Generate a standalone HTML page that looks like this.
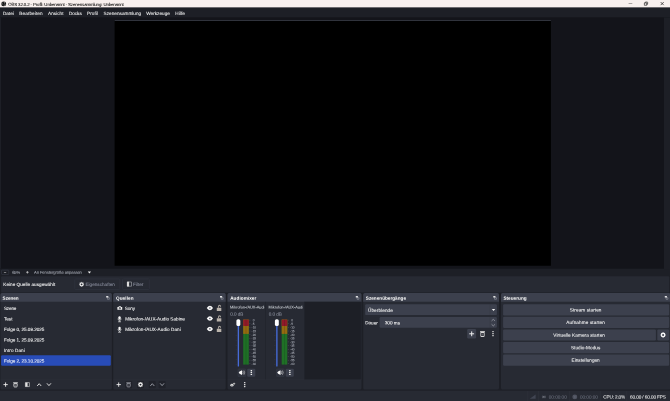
<!DOCTYPE html><html lang="de"><head><meta charset="utf-8"><title>OBS 32.0.2</title><style>
html,body{margin:0;padding:0;}body{width:670px;height:401px;overflow:hidden;position:relative;background:#1d1f26;}#ui{position:absolute;left:0;top:0;will-change:transform;font-family:"Liberation Sans",sans-serif;}#ui text{white-space:pre;}
</style></head><body>
<svg id="ui" width="670" height="401" viewBox="0 0 670 401">
<rect x="0.00" y="0.00" width="670.00" height="7.60" fill="#f8f0ee"/>
<rect x="0.00" y="7.60" width="670.00" height="9.80" fill="#1d1f26"/>
<rect x="0.00" y="17.40" width="670.00" height="251.30" fill="#13141a"/>
<rect x="664.00" y="17.40" width="6.00" height="251.80" fill="#1d1f26"/>
<rect x="0.00" y="17.40" width="1.00" height="251.30" fill="#1d1f26"/>
<rect x="114.60" y="20.00" width="436.30" height="245.75" fill="#000"/>
<rect x="114.60" y="20.00" width="436.30" height="1.00" fill="#30333c"/>
<rect x="1.10" y="276.15" width="668.20" height="16.45" rx="1.2" fill="#272a33"/>
<svg x="1.10" y="1.30" width="5.20" height="5.20" viewBox="0 0 16 16" preserveAspectRatio="none" overflow="visible"><circle cx="8" cy="8" r="7.6" fill="#111"/><path d="M8 2.6a3 3 0 0 1 2.6 4.4M12.8 9.4a3 3 0 0 1-4.9 2.2M3.4 10a3 3 0 0 1 1.4-4.6" fill="none" stroke="#e8e0e0" stroke-width="1.5"/></svg>
<rect x="628.60" y="3.15" width="3.70" height="0.50" fill="#5a5a5a"/>
<svg x="644.15" y="1.80" width="3.70" height="3.70" viewBox="0 0 16 16" preserveAspectRatio="none" overflow="visible"><path d="M1 4.8H11.2V15H1Z" fill="none" stroke="#101010" stroke-width="2.6" stroke-linejoin="round"/><path d="M4.8 4.8V2.6Q4.8 1 6.4 1H13.4Q15 1 15 2.6V9.6Q15 11.2 13.4 11.2H11.2" fill="none" stroke="#101010" stroke-width="2.6"/></svg>
<svg x="660.45" y="1.85" width="3.50" height="3.50" viewBox="0 0 16 16" preserveAspectRatio="none" overflow="visible"><path d="M1 1L15 15M15 1L1 15" stroke="#101010" stroke-width="3"/></svg>
<rect x="1.55" y="270.15" width="7.20" height="4.30" rx="0.55" fill="none" stroke="#3d414e" stroke-width="0.5"/>
<rect x="3.90" y="272.05" width="2.30" height="0.50" fill="#d8d8d8"/>
<svg x="25.90" y="270.80" width="3.00" height="3.00" viewBox="0 0 16 16" preserveAspectRatio="none" overflow="visible"><path d="M8 1V15M1 8H15" stroke="#e0e0e0" stroke-width="3.2"/></svg>
<svg x="87.70" y="271.30" width="3.40" height="2.20" viewBox="0 0 16 16" preserveAspectRatio="none" overflow="visible"><path d="M0.5 1H15.5L8 15.5Z" fill="#f2f2f2"/></svg>
<rect x="74.75" y="278.95" width="45.10" height="10.50" rx="0.95" fill="#272a33" stroke="#343844" stroke-width="0.5"/>
<rect x="122.45" y="278.95" width="26.90" height="10.50" rx="0.95" fill="#272a33" stroke="#343844" stroke-width="0.5"/>
<svg x="79.15" y="281.85" width="4.90" height="4.90" viewBox="0 0 16 16" preserveAspectRatio="none" overflow="visible"><circle cx="8" cy="8" r="5" fill="none" stroke="#ececec" stroke-width="4.2"/><path d="M8 0V16M0 8H16M2.3 2.3L13.7 13.7M13.7 2.3L2.3 13.7" stroke="#ececec" stroke-width="2.2" stroke-dasharray="1.6 12.8 1.6 100" opacity=".8"/></svg>
<svg x="126.90" y="281.60" width="5.00" height="5.00" viewBox="0 0 16 16" preserveAspectRatio="none" overflow="visible"><path d="M1.2 1.2H14.8V14.8H1.2Z" fill="none" stroke="#b4b6bc" stroke-width="1.8"/><path d="M0.4 0.4H7V15.6H0.4Z" fill="#dcdcdc"/></svg>
<rect x="0.40" y="293.10" width="111.50" height="96.50" rx="1.6" fill="#272a33"/>
<path d="M0.40 301.80V294.70Q0.40 293.10 2.00 293.10H110.30Q111.90 293.10 111.90 294.70V301.80Z" fill="#3c404d"/>
<svg x="105.65" y="295.45" width="4.30" height="4.30" viewBox="0 0 16 16" preserveAspectRatio="none" overflow="visible"><path d="M6.5 8.2H13.8V14.2H6.5Z" fill="none" stroke="#9da0aa" stroke-width="1.9"/><path d="M2 2.4H10V7.6H2Z" fill="#f4f4f4"/></svg>
<rect x="113.20" y="293.10" width="112.50" height="96.50" rx="1.6" fill="#272a33"/>
<path d="M113.20 301.80V294.70Q113.20 293.10 114.80 293.10H224.10Q225.70 293.10 225.70 294.70V301.80Z" fill="#3c404d"/>
<svg x="219.45" y="295.45" width="4.30" height="4.30" viewBox="0 0 16 16" preserveAspectRatio="none" overflow="visible"><path d="M6.5 8.2H13.8V14.2H6.5Z" fill="none" stroke="#9da0aa" stroke-width="1.9"/><path d="M2 2.4H10V7.6H2Z" fill="#f4f4f4"/></svg>
<rect x="227.50" y="293.10" width="134.00" height="96.50" rx="1.6" fill="#272a33"/>
<path d="M227.50 301.80V294.70Q227.50 293.10 229.10 293.10H359.90Q361.50 293.10 361.50 294.70V301.80Z" fill="#3c404d"/>
<svg x="355.25" y="295.45" width="4.30" height="4.30" viewBox="0 0 16 16" preserveAspectRatio="none" overflow="visible"><path d="M6.5 8.2H13.8V14.2H6.5Z" fill="none" stroke="#9da0aa" stroke-width="1.9"/><path d="M2 2.4H10V7.6H2Z" fill="#f4f4f4"/></svg>
<rect x="363.20" y="293.10" width="135.80" height="96.50" rx="1.6" fill="#272a33"/>
<path d="M363.20 301.80V294.70Q363.20 293.10 364.80 293.10H497.40Q499.00 293.10 499.00 294.70V301.80Z" fill="#3c404d"/>
<svg x="492.75" y="295.45" width="4.30" height="4.30" viewBox="0 0 16 16" preserveAspectRatio="none" overflow="visible"><path d="M6.5 8.2H13.8V14.2H6.5Z" fill="none" stroke="#9da0aa" stroke-width="1.9"/><path d="M2 2.4H10V7.6H2Z" fill="#f4f4f4"/></svg>
<rect x="501.00" y="293.10" width="169.50" height="96.50" rx="1.6" fill="#272a33"/>
<path d="M501.00 301.80V294.70Q501.00 293.10 502.60 293.10H668.90Q670.50 293.10 670.50 294.70V301.80Z" fill="#3c404d"/>
<svg x="664.25" y="295.45" width="4.30" height="4.30" viewBox="0 0 16 16" preserveAspectRatio="none" overflow="visible"><path d="M6.5 8.2H13.8V14.2H6.5Z" fill="none" stroke="#9da0aa" stroke-width="1.9"/><path d="M2 2.4H10V7.6H2Z" fill="#f4f4f4"/></svg>
<rect x="1.10" y="355.15" width="109.70" height="10.55" rx="1.2" fill="#284cb8"/>
<rect x="0.40" y="379.30" width="111.50" height="0.40" fill="#2e313b"/>
<rect x="113.20" y="379.30" width="112.50" height="0.40" fill="#2e313b"/>
<rect x="227.50" y="379.30" width="134.00" height="0.40" fill="#2e313b"/>
<svg x="3.25" y="382.25" width="4.70" height="4.70" viewBox="0 0 16 16" preserveAspectRatio="none" overflow="visible"><path d="M8 0.6V15.4M0.6 8H15.4" stroke="#f0f0f0" stroke-width="3"/></svg>
<svg x="13.00" y="381.85" width="5.00" height="5.50" viewBox="0 0 16 16" preserveAspectRatio="none" overflow="visible"><path d="M2.8 5H13.2V12.6Q13.2 14.8 11 14.8H5Q2.8 14.8 2.8 12.6Z" fill="none" stroke="#ececec" stroke-width="2.5"/><path d="M0.6 2.4H15.4" stroke="#ececec" stroke-width="2.4"/><path d="M8 7.4V12" stroke="#ececec" stroke-width="1.2" opacity=".7"/></svg>
<svg x="25.05" y="382.25" width="4.70" height="4.70" viewBox="0 0 16 16" preserveAspectRatio="none" overflow="visible"><path d="M1.2 1.2H14.8V14.8H1.2Z" fill="none" stroke="#e2e2e2" stroke-width="2"/><path d="M1.2 1.2H8.6V14.8H1.2Z" fill="#e2e2e2"/></svg>
<svg x="36.70" y="382.20" width="5.00" height="4.80" viewBox="0 0 16 16" preserveAspectRatio="none" overflow="visible"><path d="M1.6 12.6L8 5L14.4 12.6" fill="none" stroke="#e2e2e2" stroke-width="3.1"/></svg>
<svg x="46.45" y="382.20" width="5.00" height="4.80" viewBox="0 0 16 16" preserveAspectRatio="none" overflow="visible"><path d="M1.6 3.8L8 11.4L14.4 3.8" fill="none" stroke="#e2e2e2" stroke-width="3.1"/></svg>
<rect x="125.10" y="381.00" width="7.00" height="7.20" rx="1" fill="#20222a"/>
<rect x="137.00" y="381.00" width="7.00" height="7.20" rx="1" fill="#20222a"/>
<rect x="148.80" y="381.00" width="7.00" height="7.20" rx="1" fill="#20222a"/>
<rect x="158.60" y="381.00" width="7.00" height="7.20" rx="1" fill="#20222a"/>
<svg x="116.35" y="382.25" width="4.70" height="4.70" viewBox="0 0 16 16" preserveAspectRatio="none" overflow="visible"><path d="M8 0.6V15.4M0.6 8H15.4" stroke="#f0f0f0" stroke-width="3"/></svg>
<svg x="126.10" y="381.90" width="5.00" height="5.40" viewBox="0 0 16 16" preserveAspectRatio="none" overflow="visible"><path d="M2.8 5H13.2V12.6Q13.2 14.8 11 14.8H5Q2.8 14.8 2.8 12.6Z" fill="none" stroke="#9a9da6" stroke-width="2.5"/><path d="M0.6 2.4H15.4" stroke="#9a9da6" stroke-width="2.4"/><path d="M8 7.4V12" stroke="#9a9da6" stroke-width="1.2" opacity=".7"/></svg>
<svg x="137.90" y="382.00" width="5.20" height="5.20" viewBox="0 0 16 16" preserveAspectRatio="none" overflow="visible"><circle cx="8" cy="8" r="5" fill="none" stroke="#f0f0f0" stroke-width="4.2"/><path d="M8 0V16M0 8H16M2.3 2.3L13.7 13.7M13.7 2.3L2.3 13.7" stroke="#f0f0f0" stroke-width="2.2" stroke-dasharray="1.6 12.8 1.6 100" opacity=".8"/></svg>
<svg x="149.80" y="382.20" width="5.00" height="4.80" viewBox="0 0 16 16" preserveAspectRatio="none" overflow="visible"><path d="M1.6 12.6L8 5L14.4 12.6" fill="none" stroke="#9a9da6" stroke-width="3.1"/></svg>
<svg x="159.60" y="382.20" width="5.00" height="4.80" viewBox="0 0 16 16" preserveAspectRatio="none" overflow="visible"><path d="M1.6 3.8L8 11.4L14.4 3.8" fill="none" stroke="#9a9da6" stroke-width="3.1"/></svg>
<svg x="117.05" y="305.48" width="5.50" height="5.00" viewBox="0 0 16 16" preserveAspectRatio="none" overflow="visible"><path d="M1 4.5H4.2L5.4 2.4H10.6L11.8 4.5H15V14H1Z" fill="#f0f0f0"/><circle cx="8" cy="9" r="3" fill="#272a33"/><circle cx="8" cy="9" r="1.4" fill="#f0f0f0"/></svg>
<svg x="206.70" y="305.63" width="6.40" height="4.80" viewBox="0 0 16 16" preserveAspectRatio="none" overflow="visible"><path d="M0.2 8Q4 0.4 8 0.4Q12 0.4 15.8 8Q12 15.6 8 15.6Q4 15.6 0.2 8Z" fill="#f6f6f6"/><ellipse cx="8" cy="7.8" rx="2.1" ry="2.7" fill="#666a76"/></svg>
<svg x="216.70" y="304.73" width="4.70" height="6.30" viewBox="0 0 16 16" preserveAspectRatio="none" overflow="visible"><path d="M0.3 7.8H15.7V16H0.3Z" fill="#bab3ab"/><path d="M6 7.8V4.6Q6 1.6 9.6 1.6Q13.2 1.6 13.2 4.6V5.4" fill="none" stroke="#a9a39d" stroke-width="3.4"/></svg>
<svg x="117.60" y="316.11" width="3.90" height="6.00" viewBox="0 0 16 24" preserveAspectRatio="none" overflow="visible"><rect x="3.4" y="0.4" width="9.2" height="14" rx="4.6" fill="#f6f6f6"/><path d="M2 9.5V11.2Q2 17.6 8 17.6Q14 17.6 14 11.2V9.5" fill="none" stroke="#e8e8e8" stroke-width="2.6"/><path d="M8 18V22" stroke="#ececec" stroke-width="2.8"/><path d="M2 22.6H14" stroke="#f4f4f4" stroke-width="2.6"/></svg>
<svg x="206.70" y="316.11" width="6.40" height="4.80" viewBox="0 0 16 16" preserveAspectRatio="none" overflow="visible"><path d="M0.2 8Q4 0.4 8 0.4Q12 0.4 15.8 8Q12 15.6 8 15.6Q4 15.6 0.2 8Z" fill="#f6f6f6"/><ellipse cx="8" cy="7.8" rx="2.1" ry="2.7" fill="#666a76"/></svg>
<svg x="216.70" y="315.21" width="4.70" height="6.30" viewBox="0 0 16 16" preserveAspectRatio="none" overflow="visible"><path d="M0.3 7.8H15.7V16H0.3Z" fill="#bab3ab"/><path d="M6 7.8V4.6Q6 1.6 9.6 1.6Q13.2 1.6 13.2 4.6V5.4" fill="none" stroke="#a9a39d" stroke-width="3.4"/></svg>
<svg x="117.60" y="326.59" width="3.90" height="6.00" viewBox="0 0 16 24" preserveAspectRatio="none" overflow="visible"><rect x="3.4" y="0.4" width="9.2" height="14" rx="4.6" fill="#f6f6f6"/><path d="M2 9.5V11.2Q2 17.6 8 17.6Q14 17.6 14 11.2V9.5" fill="none" stroke="#e8e8e8" stroke-width="2.6"/><path d="M8 18V22" stroke="#ececec" stroke-width="2.8"/><path d="M2 22.6H14" stroke="#f4f4f4" stroke-width="2.6"/></svg>
<svg x="206.70" y="326.59" width="6.40" height="4.80" viewBox="0 0 16 16" preserveAspectRatio="none" overflow="visible"><path d="M0.2 8Q4 0.4 8 0.4Q12 0.4 15.8 8Q12 15.6 8 15.6Q4 15.6 0.2 8Z" fill="#f6f6f6"/><ellipse cx="8" cy="7.8" rx="2.1" ry="2.7" fill="#666a76"/></svg>
<svg x="216.70" y="325.69" width="4.70" height="6.30" viewBox="0 0 16 16" preserveAspectRatio="none" overflow="visible"><path d="M0.3 7.8H15.7V16H0.3Z" fill="#bab3ab"/><path d="M6 7.8V4.6Q6 1.6 9.6 1.6Q13.2 1.6 13.2 4.6V5.4" fill="none" stroke="#a9a39d" stroke-width="3.4"/></svg>
<rect x="304.70" y="301.80" width="56.10" height="77.60" fill="#1d1f26"/>
<rect x="265.00" y="301.80" width="0.50" height="77.60" fill="#1f2129"/>
<rect x="304.30" y="301.80" width="0.50" height="77.60" fill="#1f2129"/>
<rect x="237.70" y="322.00" width="1.35" height="44.60" rx="0.6" fill="#476bd7"/>
<rect x="236.40" y="319.20" width="3.90" height="6.80" rx="1.6" fill="#fff"/>
<rect x="235.60" y="330.75" width="1.40" height="0.35" fill="#3a3e4a"/>
<rect x="235.60" y="335.50" width="1.40" height="0.35" fill="#3a3e4a"/>
<rect x="235.60" y="340.25" width="1.40" height="0.35" fill="#3a3e4a"/>
<rect x="235.60" y="345.00" width="1.40" height="0.35" fill="#3a3e4a"/>
<rect x="235.60" y="349.75" width="1.40" height="0.35" fill="#3a3e4a"/>
<rect x="235.60" y="354.50" width="1.40" height="0.35" fill="#3a3e4a"/>
<rect x="235.60" y="359.25" width="1.40" height="0.35" fill="#3a3e4a"/>
<rect x="235.60" y="364.00" width="1.40" height="0.35" fill="#3a3e4a"/>
<rect x="243.20" y="319.60" width="5.60" height="45.00" fill="#1f7026"/>
<rect x="243.20" y="319.60" width="5.60" height="14.30" fill="#946a10"/>
<rect x="243.20" y="319.60" width="5.60" height="6.40" fill="#901a28"/>
<rect x="245.85" y="319.60" width="0.30" height="45.00" fill="rgba(20,22,28,.45)"/>
<rect x="249.30" y="319.90" width="1.10" height="0.40" fill="#5c606c"/>
<rect x="249.30" y="323.54" width="1.10" height="0.40" fill="#5c606c"/>
<rect x="249.30" y="327.18" width="1.10" height="0.40" fill="#5c606c"/>
<rect x="249.30" y="330.82" width="1.10" height="0.40" fill="#5c606c"/>
<rect x="249.30" y="334.46" width="1.10" height="0.40" fill="#5c606c"/>
<rect x="249.30" y="338.10" width="1.10" height="0.40" fill="#5c606c"/>
<rect x="249.30" y="341.74" width="1.10" height="0.40" fill="#5c606c"/>
<rect x="249.30" y="345.38" width="1.10" height="0.40" fill="#5c606c"/>
<rect x="249.30" y="349.02" width="1.10" height="0.40" fill="#5c606c"/>
<rect x="249.30" y="352.66" width="1.10" height="0.40" fill="#5c606c"/>
<rect x="249.30" y="356.30" width="1.10" height="0.40" fill="#5c606c"/>
<rect x="249.30" y="359.94" width="1.10" height="0.40" fill="#5c606c"/>
<rect x="249.30" y="363.58" width="1.10" height="0.40" fill="#5c606c"/>
<rect x="237.92" y="368.93" width="7.85" height="7.65" rx="0.88" fill="#2f323d" stroke="#3b3f4c" stroke-width="0.45"/>
<rect x="247.20" y="368.70" width="8.10" height="8.10" rx="1.1" fill="#3c404d"/>
<svg x="238.70" y="370.10" width="6.40" height="5.00" viewBox="0 0 16 16" preserveAspectRatio="none" overflow="visible"><path d="M0 8L2.2 4.6L8.4 0.4V15.6L2.2 11.4Z" fill="#f8f8f8"/><path d="M10.2 3.6Q12.6 8 10.2 12.4" fill="none" stroke="#e8e8e8" stroke-width="1.6"/><path d="M13 1.2Q16.8 8 13 14.8" fill="none" stroke="#e0e0e0" stroke-width="1.6"/></svg>
<svg x="248.65" y="369.75" width="5.40" height="5.40" viewBox="0 0 16 16" preserveAspectRatio="none" overflow="visible"><rect x="5.8" y="0.5" width="4.4" height="3.7" rx="1" fill="#f0f0f0"/><rect x="5.8" y="6.15" width="4.4" height="3.7" rx="1" fill="#f0f0f0"/><rect x="5.8" y="11.8" width="4.4" height="3.7" rx="1" fill="#f0f0f0"/></svg>
<rect x="276.20" y="322.00" width="1.35" height="44.60" rx="0.6" fill="#476bd7"/>
<rect x="274.90" y="319.20" width="3.90" height="6.80" rx="1.6" fill="#fff"/>
<rect x="274.10" y="330.75" width="1.40" height="0.35" fill="#3a3e4a"/>
<rect x="274.10" y="335.50" width="1.40" height="0.35" fill="#3a3e4a"/>
<rect x="274.10" y="340.25" width="1.40" height="0.35" fill="#3a3e4a"/>
<rect x="274.10" y="345.00" width="1.40" height="0.35" fill="#3a3e4a"/>
<rect x="274.10" y="349.75" width="1.40" height="0.35" fill="#3a3e4a"/>
<rect x="274.10" y="354.50" width="1.40" height="0.35" fill="#3a3e4a"/>
<rect x="274.10" y="359.25" width="1.40" height="0.35" fill="#3a3e4a"/>
<rect x="274.10" y="364.00" width="1.40" height="0.35" fill="#3a3e4a"/>
<rect x="281.70" y="319.60" width="5.60" height="45.00" fill="#1f7026"/>
<rect x="281.70" y="319.60" width="5.60" height="14.30" fill="#946a10"/>
<rect x="281.70" y="319.60" width="5.60" height="6.40" fill="#901a28"/>
<rect x="284.35" y="319.60" width="0.30" height="45.00" fill="rgba(20,22,28,.45)"/>
<rect x="287.80" y="319.90" width="1.10" height="0.40" fill="#5c606c"/>
<rect x="287.80" y="323.54" width="1.10" height="0.40" fill="#5c606c"/>
<rect x="287.80" y="327.18" width="1.10" height="0.40" fill="#5c606c"/>
<rect x="287.80" y="330.82" width="1.10" height="0.40" fill="#5c606c"/>
<rect x="287.80" y="334.46" width="1.10" height="0.40" fill="#5c606c"/>
<rect x="287.80" y="338.10" width="1.10" height="0.40" fill="#5c606c"/>
<rect x="287.80" y="341.74" width="1.10" height="0.40" fill="#5c606c"/>
<rect x="287.80" y="345.38" width="1.10" height="0.40" fill="#5c606c"/>
<rect x="287.80" y="349.02" width="1.10" height="0.40" fill="#5c606c"/>
<rect x="287.80" y="352.66" width="1.10" height="0.40" fill="#5c606c"/>
<rect x="287.80" y="356.30" width="1.10" height="0.40" fill="#5c606c"/>
<rect x="287.80" y="359.94" width="1.10" height="0.40" fill="#5c606c"/>
<rect x="287.80" y="363.58" width="1.10" height="0.40" fill="#5c606c"/>
<rect x="276.43" y="368.93" width="7.85" height="7.65" rx="0.88" fill="#2f323d" stroke="#3b3f4c" stroke-width="0.45"/>
<rect x="285.70" y="368.70" width="8.10" height="8.10" rx="1.1" fill="#3c404d"/>
<svg x="277.20" y="370.10" width="6.40" height="5.00" viewBox="0 0 16 16" preserveAspectRatio="none" overflow="visible"><path d="M0 8L2.2 4.6L8.4 0.4V15.6L2.2 11.4Z" fill="#f8f8f8"/><path d="M10.2 3.6Q12.6 8 10.2 12.4" fill="none" stroke="#e8e8e8" stroke-width="1.6"/><path d="M13 1.2Q16.8 8 13 14.8" fill="none" stroke="#e0e0e0" stroke-width="1.6"/></svg>
<svg x="287.15" y="369.75" width="5.40" height="5.40" viewBox="0 0 16 16" preserveAspectRatio="none" overflow="visible"><rect x="5.8" y="0.5" width="4.4" height="3.7" rx="1" fill="#f0f0f0"/><rect x="5.8" y="6.15" width="4.4" height="3.7" rx="1" fill="#f0f0f0"/><rect x="5.8" y="11.8" width="4.4" height="3.7" rx="1" fill="#f0f0f0"/></svg>
<svg x="229.90" y="382.30" width="5.60" height="4.60" viewBox="0 0 16 16" preserveAspectRatio="none" overflow="visible"><circle cx="5.8" cy="10" r="4.6" fill="#dcdcdc"/><circle cx="5.8" cy="10" r="1.5" fill="#272a33"/><circle cx="12.2" cy="4.4" r="3.1" fill="#d0d0d0"/><circle cx="12.2" cy="4.4" r="1" fill="#272a33"/></svg>
<svg x="242.00" y="381.95" width="5.40" height="5.40" viewBox="0 0 16 16" preserveAspectRatio="none" overflow="visible"><rect x="5.8" y="0.5" width="4.4" height="3.7" rx="1" fill="#e2e2e2"/><rect x="5.8" y="6.15" width="4.4" height="3.7" rx="1" fill="#e2e2e2"/><rect x="5.8" y="11.8" width="4.4" height="3.7" rx="1" fill="#e2e2e2"/></svg>
<rect x="365.20" y="304.30" width="131.70" height="10.80" rx="1.2" fill="#3c404d"/>
<rect x="489.80" y="304.30" width="0.40" height="10.80" fill="#343843"/>
<svg x="491.70" y="308.95" width="3.60" height="2.10" viewBox="0 0 16 16" preserveAspectRatio="none" overflow="visible"><path d="M0.5 1H15.5L8 15.5Z" fill="#f4f4f4"/></svg>
<rect x="379.60" y="317.00" width="117.30" height="10.80" rx="1.2" fill="#3c404d"/>
<rect x="489.80" y="317.00" width="0.40" height="10.80" fill="#343843"/>
<rect x="490.20" y="322.30" width="6.70" height="0.30" fill="#363a46"/>
<svg x="491.20" y="318.85" width="4.20" height="2.30" viewBox="0 0 16 16" preserveAspectRatio="none" overflow="visible"><path d="M1.5 14L8 3L14.5 14" fill="none" stroke="#c4c6cd" stroke-width="2.6"/></svg>
<svg x="491.20" y="324.05" width="4.20" height="2.30" viewBox="0 0 16 16" preserveAspectRatio="none" overflow="visible"><path d="M1.5 2L8 13L14.5 2" fill="none" stroke="#c4c6cd" stroke-width="2.6"/></svg>
<rect x="467.20" y="329.00" width="8.90" height="9.50" rx="1.2" fill="#3c404d"/>
<svg x="469.10" y="331.20" width="5.20" height="5.20" viewBox="0 0 16 16" preserveAspectRatio="none" overflow="visible"><path d="M8 0.6V15.4M0.6 8H15.4" stroke="#f4f4f4" stroke-width="3"/></svg>
<svg x="479.90" y="330.50" width="5.20" height="6.60" viewBox="0 0 16 16" preserveAspectRatio="none" overflow="visible"><path d="M2.8 5H13.2V12.6Q13.2 14.8 11 14.8H5Q2.8 14.8 2.8 12.6Z" fill="none" stroke="#d8d8d8" stroke-width="2.5"/><path d="M0.6 2.4H15.4" stroke="#d8d8d8" stroke-width="2.4"/><path d="M8 7.4V12" stroke="#d8d8d8" stroke-width="1.2" opacity=".7"/></svg>
<svg x="490.30" y="330.70" width="5.40" height="5.80" viewBox="0 0 16 16" preserveAspectRatio="none" overflow="visible"><rect x="5.8" y="0.5" width="4.4" height="3.7" rx="1" fill="#d4d4d4"/><rect x="5.8" y="6.15" width="4.4" height="3.7" rx="1" fill="#d4d4d4"/><rect x="5.8" y="11.8" width="4.4" height="3.7" rx="1" fill="#d4d4d4"/></svg>
<rect x="503.10" y="304.30" width="166.10" height="11.15" rx="1.2" fill="#3c404d"/>
<rect x="503.10" y="316.86" width="166.10" height="11.15" rx="1.2" fill="#3c404d"/>
<rect x="503.10" y="329.42" width="152.80" height="11.15" rx="1.2" fill="#3c404d"/>
<rect x="657.30" y="329.42" width="11.90" height="11.15" rx="1.2" fill="#3c404d"/>
<svg x="660.40" y="332.32" width="5.40" height="5.40" viewBox="0 0 16 16" preserveAspectRatio="none" overflow="visible"><circle cx="8" cy="8" r="5" fill="none" stroke="#f8f8f8" stroke-width="4.2"/><path d="M8 0V16M0 8H16M2.3 2.3L13.7 13.7M13.7 2.3L2.3 13.7" stroke="#f8f8f8" stroke-width="2.2" stroke-dasharray="1.6 12.8 1.6 100" opacity=".8"/></svg>
<rect x="503.10" y="341.98" width="166.10" height="11.15" rx="1.2" fill="#3c404d"/>
<rect x="503.10" y="354.54" width="166.10" height="11.15" rx="1.2" fill="#3c404d"/>
<rect x="0.00" y="390.60" width="670.00" height="10.40" fill="#272a33"/>
<rect x="527.65" y="391.00" width="0.50" height="10.00" fill="#30333d"/>
<rect x="538.45" y="391.00" width="0.50" height="10.00" fill="#30333d"/>
<rect x="569.15" y="391.00" width="0.50" height="10.00" fill="#30333d"/>
<rect x="600.15" y="391.00" width="0.50" height="10.00" fill="#30333d"/>
<rect x="626.65" y="391.00" width="0.50" height="10.00" fill="#30333d"/>
<svg x="529.80" y="394.40" width="5.80" height="4.30" viewBox="0 0 16 16" preserveAspectRatio="none" overflow="visible"><path d="M0 16H16V0Z" fill="#414552"/></svg>
<svg x="541.70" y="395.20" width="4.40" height="3.40" viewBox="0 0 16 16" preserveAspectRatio="none" overflow="visible"><circle cx="8" cy="8" r="3" fill="#a0a3ac"/><path d="M4 1.5Q0.5 8 4 14.5M12 1.5Q15.5 8 12 14.5" fill="none" stroke="#666a77" stroke-width="2.6"/></svg>
<svg x="572.35" y="394.45" width="4.90" height="4.90" viewBox="0 0 16 16" preserveAspectRatio="none" overflow="visible"><circle cx="8" cy="8" r="8" fill="#4f5360"/><circle cx="8" cy="8" r="3" fill="#5b5f6c"/></svg>
<text id="t0" transform="translate(8.20 5.87) rotate(0.05)" font-size="4.35" fill="#000" letter-spacing="-0.117" stroke="#000" stroke-width="0.05">OBS 32.0.2 - Profil: Unbenannt - Szenensammlung: Unbenannt</text>
<text id="t1" transform="translate(2.90 14.97) rotate(0.05)" font-size="4.65" fill="#f4f4f4" letter-spacing="0.011" stroke="#f4f4f4" stroke-width="0.05">Datei</text>
<text id="t2" transform="translate(19.30 14.97) rotate(0.05)" font-size="4.65" fill="#f4f4f4" letter-spacing="0.085" stroke="#f4f4f4" stroke-width="0.05">Bearbeiten</text>
<text id="t3" transform="translate(48.00 14.97) rotate(0.05)" font-size="4.65" fill="#f4f4f4" letter-spacing="0.040" stroke="#f4f4f4" stroke-width="0.05">Ansicht</text>
<text id="t4" transform="translate(68.90 14.97) rotate(0.05)" font-size="4.65" fill="#f4f4f4" letter-spacing="-0.021" stroke="#f4f4f4" stroke-width="0.05">Docks</text>
<text id="t5" transform="translate(87.00 14.97) rotate(0.05)" font-size="4.65" fill="#f4f4f4" letter-spacing="0.087" stroke="#f4f4f4" stroke-width="0.05">Profil</text>
<text id="t6" transform="translate(103.60 14.97) rotate(0.05)" font-size="4.65" fill="#f4f4f4" letter-spacing="0.032" stroke="#f4f4f4" stroke-width="0.05">Szenensammlung</text>
<text id="t7" transform="translate(146.20 14.97) rotate(0.05)" font-size="4.65" fill="#f4f4f4" letter-spacing="0.045" stroke="#f4f4f4" stroke-width="0.05">Werkzeuge</text>
<text id="t8" transform="translate(175.20 14.97) rotate(0.05)" font-size="4.65" fill="#f4f4f4" letter-spacing="0.101" stroke="#f4f4f4" stroke-width="0.05">Hilfe</text>
<text id="t9" transform="translate(12.20 273.78) rotate(0.05)" font-size="4.1" fill="#aeb2bc" letter-spacing="-0.134" stroke="#aeb2bc" stroke-width="0.05">65%</text>
<text id="t10" transform="translate(34.00 273.73) rotate(0.05)" font-size="4.1" fill="#aeb2bc" letter-spacing="-0.075" stroke="#aeb2bc" stroke-width="0.05">An Fenstergröße anpassen</text>
<text id="t11" transform="translate(3.30 286.07) rotate(0.05)" font-size="4.65" fill="#fff" letter-spacing="0.024" stroke="#fff" stroke-width="0.05">Keine Quelle ausgewählt</text>
<text id="t12" transform="translate(85.40 286.07) rotate(0.05)" font-size="4.65" fill="#8c91a0" letter-spacing="0.006" stroke="#8c91a0" stroke-width="0.05">Eigenschaften</text>
<text id="t13" transform="translate(133.10 286.07) rotate(0.05)" font-size="4.65" fill="#8c91a0" letter-spacing="-0.019" stroke="#8c91a0" stroke-width="0.05">Filter</text>
<text id="t14" transform="translate(2.60 299.77) rotate(0.05)" font-size="4.65" fill="#fff" font-weight="700" letter-spacing="-0.058">Szenen</text>
<text id="t15" transform="translate(115.90 299.77) rotate(0.05)" font-size="4.65" fill="#fff" font-weight="700" letter-spacing="0.124">Quellen</text>
<text id="t16" transform="translate(230.20 299.77) rotate(0.05)" font-size="4.65" fill="#fff" font-weight="700" letter-spacing="0.057">Audiomixer</text>
<text id="t17" transform="translate(365.80 299.77) rotate(0.05)" font-size="4.65" fill="#fff" font-weight="700" letter-spacing="0.014">Szenenübergänge</text>
<text id="t18" transform="translate(503.40 299.77) rotate(0.05)" font-size="4.65" fill="#fff" font-weight="700" letter-spacing="0.039">Steuerung</text>
<text id="t19" transform="translate(3.90 310.00) rotate(0.05)" font-size="4.65" fill="#fff" letter-spacing="-0.154" stroke="#fff" stroke-width="0.05">Szene</text>
<text id="t20" transform="translate(3.90 320.48) rotate(0.05)" font-size="4.65" fill="#fff" letter-spacing="0.021" stroke="#fff" stroke-width="0.05">Test</text>
<text id="t21" transform="translate(3.90 330.96) rotate(0.05)" font-size="4.65" fill="#fff" letter-spacing="-0.047" stroke="#fff" stroke-width="0.05">Folge 0, 25.09.2025</text>
<text id="t22" transform="translate(3.90 341.44) rotate(0.05)" font-size="4.65" fill="#fff" letter-spacing="-0.047" stroke="#fff" stroke-width="0.05">Folge 1, 25.09.2025</text>
<text id="t23" transform="translate(3.90 351.92) rotate(0.05)" font-size="4.65" fill="#fff" letter-spacing="0.087" stroke="#fff" stroke-width="0.05">Intro Dani</text>
<text id="t24" transform="translate(3.90 362.40) rotate(0.05)" font-size="4.65" fill="#fff" letter-spacing="-0.047" stroke="#fff" stroke-width="0.05">Folge 2, 23.10.2025</text>
<text id="t25" transform="translate(124.70 310.00) rotate(0.05)" font-size="4.65" fill="#fff" letter-spacing="-0.095" stroke="#fff" stroke-width="0.05">Sony</text>
<text id="t26" transform="translate(125.20 320.48) rotate(0.05)" font-size="4.65" fill="#fff" letter-spacing="0.014" stroke="#fff" stroke-width="0.05">Mikrofon-/AUX-Audio Sabine</text>
<text id="t27" transform="translate(125.20 330.96) rotate(0.05)" font-size="4.65" fill="#fff" letter-spacing="0.049" stroke="#fff" stroke-width="0.05">Mikrofon-/AUX-Audio Dani</text>
<svg x="229.10" y="302.50" width="35.20" height="9" overflow="hidden"><text id="t28" transform="translate(1 6) rotate(0.05)" font-size="3.9" fill="#d4d8de" stroke="#d4d8de" stroke-width="0.05">Mikrofon-/AUX-Audio</text></svg>
<text id="t29" transform="translate(230.20 315.62) rotate(0.05)" font-size="4.65" fill="#8e93a0" letter-spacing="-0.037" stroke="#8e93a0" stroke-width="0.05">0.0 dB</text>
<text id="t30" transform="translate(252.80 321.32) rotate(0.05)" font-size="3.1" fill="#b0b4be" stroke="#b0b4be" stroke-width="0.05">0</text>
<text id="t31" transform="translate(251.60 324.96) rotate(0.05)" font-size="3.1" fill="#b0b4be" stroke="#b0b4be" stroke-width="0.05">-5</text>
<text id="t32" transform="translate(251.60 328.60) rotate(0.05)" font-size="3.1" fill="#b0b4be" stroke="#b0b4be" stroke-width="0.05">-10</text>
<text id="t33" transform="translate(251.60 332.24) rotate(0.05)" font-size="3.1" fill="#b0b4be" stroke="#b0b4be" stroke-width="0.05">-15</text>
<text id="t34" transform="translate(251.60 335.88) rotate(0.05)" font-size="3.1" fill="#b0b4be" stroke="#b0b4be" stroke-width="0.05">-20</text>
<text id="t35" transform="translate(251.60 339.52) rotate(0.05)" font-size="3.1" fill="#b0b4be" stroke="#b0b4be" stroke-width="0.05">-25</text>
<text id="t36" transform="translate(251.60 343.16) rotate(0.05)" font-size="3.1" fill="#b0b4be" stroke="#b0b4be" stroke-width="0.05">-30</text>
<text id="t37" transform="translate(251.60 346.80) rotate(0.05)" font-size="3.1" fill="#b0b4be" stroke="#b0b4be" stroke-width="0.05">-35</text>
<text id="t38" transform="translate(251.60 350.44) rotate(0.05)" font-size="3.1" fill="#b0b4be" stroke="#b0b4be" stroke-width="0.05">-40</text>
<text id="t39" transform="translate(251.60 354.08) rotate(0.05)" font-size="3.1" fill="#b0b4be" stroke="#b0b4be" stroke-width="0.05">-45</text>
<text id="t40" transform="translate(251.60 357.72) rotate(0.05)" font-size="3.1" fill="#b0b4be" stroke="#b0b4be" stroke-width="0.05">-50</text>
<text id="t41" transform="translate(251.60 361.36) rotate(0.05)" font-size="3.1" fill="#b0b4be" stroke="#b0b4be" stroke-width="0.05">-55</text>
<text id="t42" transform="translate(251.60 365.00) rotate(0.05)" font-size="3.1" fill="#b0b4be" stroke="#b0b4be" stroke-width="0.05">-60</text>
<svg x="267.60" y="302.50" width="35.20" height="9" overflow="hidden"><text id="t43" transform="translate(1 6) rotate(0.05)" font-size="3.9" fill="#d4d8de" stroke="#d4d8de" stroke-width="0.05">Mikrofon-/AUX-Audio</text></svg>
<text id="t44" transform="translate(268.70 315.62) rotate(0.05)" font-size="4.65" fill="#8e93a0" letter-spacing="-0.037" stroke="#8e93a0" stroke-width="0.05">0.0 dB</text>
<text id="t45" transform="translate(291.30 321.32) rotate(0.05)" font-size="3.1" fill="#b0b4be" stroke="#b0b4be" stroke-width="0.05">0</text>
<text id="t46" transform="translate(290.10 324.96) rotate(0.05)" font-size="3.1" fill="#b0b4be" stroke="#b0b4be" stroke-width="0.05">-5</text>
<text id="t47" transform="translate(290.10 328.60) rotate(0.05)" font-size="3.1" fill="#b0b4be" stroke="#b0b4be" stroke-width="0.05">-10</text>
<text id="t48" transform="translate(290.10 332.24) rotate(0.05)" font-size="3.1" fill="#b0b4be" stroke="#b0b4be" stroke-width="0.05">-15</text>
<text id="t49" transform="translate(290.10 335.88) rotate(0.05)" font-size="3.1" fill="#b0b4be" stroke="#b0b4be" stroke-width="0.05">-20</text>
<text id="t50" transform="translate(290.10 339.52) rotate(0.05)" font-size="3.1" fill="#b0b4be" stroke="#b0b4be" stroke-width="0.05">-25</text>
<text id="t51" transform="translate(290.10 343.16) rotate(0.05)" font-size="3.1" fill="#b0b4be" stroke="#b0b4be" stroke-width="0.05">-30</text>
<text id="t52" transform="translate(290.10 346.80) rotate(0.05)" font-size="3.1" fill="#b0b4be" stroke="#b0b4be" stroke-width="0.05">-35</text>
<text id="t53" transform="translate(290.10 350.44) rotate(0.05)" font-size="3.1" fill="#b0b4be" stroke="#b0b4be" stroke-width="0.05">-40</text>
<text id="t54" transform="translate(290.10 354.08) rotate(0.05)" font-size="3.1" fill="#b0b4be" stroke="#b0b4be" stroke-width="0.05">-45</text>
<text id="t55" transform="translate(290.10 357.72) rotate(0.05)" font-size="3.1" fill="#b0b4be" stroke="#b0b4be" stroke-width="0.05">-50</text>
<text id="t56" transform="translate(290.10 361.36) rotate(0.05)" font-size="3.1" fill="#b0b4be" stroke="#b0b4be" stroke-width="0.05">-55</text>
<text id="t57" transform="translate(290.10 365.00) rotate(0.05)" font-size="3.1" fill="#b0b4be" stroke="#b0b4be" stroke-width="0.05">-60</text>
<text id="t58" transform="translate(368.00 311.87) rotate(0.05)" font-size="4.65" fill="#fff" letter-spacing="0.090" stroke="#fff" stroke-width="0.05">Überblende</text>
<text id="t59" transform="translate(365.20 324.37) rotate(0.05)" font-size="4.65" fill="#fff" letter-spacing="-0.008" stroke="#fff" stroke-width="0.05">Dauer</text>
<text id="t60" transform="translate(384.70 324.37) rotate(0.05)" font-size="4.65" fill="#fff" letter-spacing="0.030" stroke="#fff" stroke-width="0.05">300 ms</text>
<text id="t61" transform="translate(569.80 311.52) rotate(0.05)" font-size="4.65" fill="#fff" letter-spacing="0.090" stroke="#fff" stroke-width="0.05">Stream starten</text>
<text id="t62" transform="translate(566.30 324.08) rotate(0.05)" font-size="4.65" fill="#fff" letter-spacing="0.129" stroke="#fff" stroke-width="0.05">Aufnahme starten</text>
<text id="t63" transform="translate(553.30 336.64) rotate(0.05)" font-size="4.65" fill="#fff" letter-spacing="0.083" stroke="#fff" stroke-width="0.05">Virtuelle Kamera starten</text>
<text id="t64" transform="translate(570.90 349.20) rotate(0.05)" font-size="4.65" fill="#fff" letter-spacing="0.072" stroke="#fff" stroke-width="0.05">Studio-Modus</text>
<text id="t65" transform="translate(571.60 361.76) rotate(0.05)" font-size="4.65" fill="#fff" letter-spacing="0.017" stroke="#fff" stroke-width="0.05">Einstellungen</text>
<text id="t66" transform="translate(548.80 398.57) rotate(0.05)" font-size="4.65" fill="#6a6e7b" letter-spacing="-0.022" stroke="#6a6e7b" stroke-width="0.05">00:00:00</text>
<text id="t67" transform="translate(580.00 398.57) rotate(0.05)" font-size="4.65" fill="#6a6e7b" letter-spacing="-0.035" stroke="#6a6e7b" stroke-width="0.05">00:00:00</text>
<text id="t68" transform="translate(603.20 398.47) rotate(0.05)" font-size="4.65" fill="#f0f0f0" letter-spacing="-0.119" stroke="#f0f0f0" stroke-width="0.05">CPU: 2.0%</text>
<text id="t69" transform="translate(630.00 398.47) rotate(0.05)" font-size="4.65" fill="#f0f0f0" letter-spacing="-0.090" stroke="#f0f0f0" stroke-width="0.05">60.00 / 60.00 FPS</text>
</svg></body></html>
